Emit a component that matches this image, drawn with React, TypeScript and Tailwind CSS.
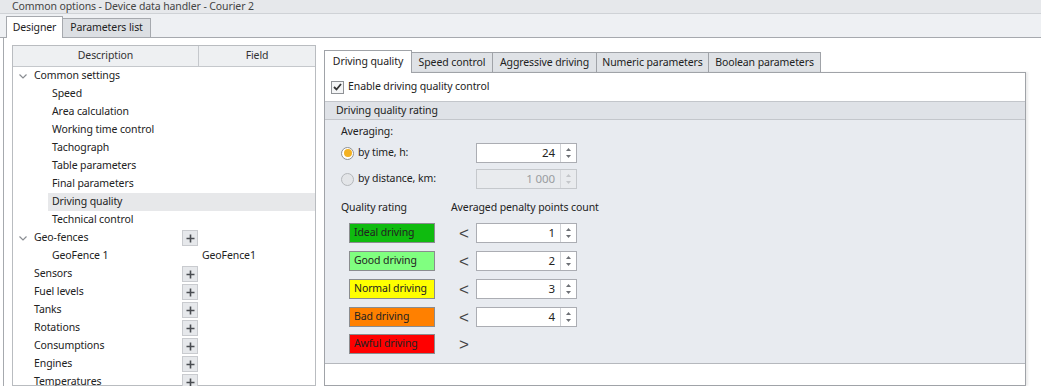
import React from 'react';

type Row = { t: string; l: 1 | 2; chev?: boolean; plus?: boolean; sel?: boolean; field?: string };

const rows: Row[] = [
  { t: 'Common settings', l: 1, chev: true },
  { t: 'Speed', l: 2 },
  { t: 'Area calculation', l: 2 },
  { t: 'Working time control', l: 2 },
  { t: 'Tachograph', l: 2 },
  { t: 'Table parameters', l: 2 },
  { t: 'Final parameters', l: 2 },
  { t: 'Driving quality', l: 2, sel: true },
  { t: 'Technical control', l: 2 },
  { t: 'Geo-fences', l: 1, chev: true, plus: true },
  { t: 'GeoFence 1', l: 2, field: 'GeoFence1' },
  { t: 'Sensors', l: 1, plus: true },
  { t: 'Fuel levels', l: 1, plus: true },
  { t: 'Tanks', l: 1, plus: true },
  { t: 'Rotations', l: 1, plus: true },
  { t: 'Consumptions', l: 1, plus: true },
  { t: 'Engines', l: 1, plus: true },
  { t: 'Temperatures', l: 1, plus: true },
];

const ratings = [
  { t: 'Ideal driving', bg: 'bg-[#0fbb0f]', sign: '<', v: '1' },
  { t: 'Good driving', bg: 'bg-[#80ff80]', sign: '<', v: '2' },
  { t: 'Normal driving', bg: 'bg-[#ffff00]', sign: '<', v: '3' },
  { t: 'Bad driving', bg: 'bg-[#ff8000]', sign: '<', v: '4' },
  { t: 'Awful driving', bg: 'bg-[#ff0000]', sign: '>', v: '' },
];

function Chevron() {
  return (
    <svg width="8" height="5" viewBox="0 0 8 5" className="ml-[6px]">
      <path d="M0.5 0.5 L4 4 L7.5 0.5" fill="none" stroke="#8a8d92" strokeWidth="1.2" />
    </svg>
  );
}

function PlusButton() {
  return (
    <div className="flex h-[16px] w-[16px] items-center justify-center border border-[#c9cbcf] bg-[#e6e8eb]">
      <svg width="9" height="9" viewBox="0 0 9 9">
        <path d="M4.5 0.5 V8.5 M0.5 4.5 H8.5" stroke="#4a4d52" strokeWidth="1.6" />
      </svg>
    </div>
  );
}

function Spin({ value, disabled }: { value: string; disabled?: boolean }) {
  const arrow = disabled ? '#c4c6ca' : '#6d7075';
  return (
    <div
      className={`flex h-[20px] w-[101px] border ${
        disabled ? 'border-[#c5c8cc] bg-[#e9ebee] text-[#9a9da1]' : 'border-[#abadb3] bg-white text-[#222]'
      }`}
    >
      <div className="flex-1 pr-[5px] text-right text-[11.5px] leading-[18px]">{value}</div>
      <div className={`flex w-[16px] flex-col items-center justify-center gap-[4px] border-l ${disabled ? 'border-[#d5d7db]' : 'border-[#d0d2d6]'}`}>
        <svg width="5" height="3" viewBox="0 0 5 3">
          <path d="M0 3 L2.5 0 L5 3 Z" fill={arrow} />
        </svg>
        <svg width="5" height="3" viewBox="0 0 5 3">
          <path d="M0 0 L2.5 3 L5 0 Z" fill={arrow} />
        </svg>
      </div>
    </div>
  );
}

function Radio({ checked, disabled }: { checked?: boolean; disabled?: boolean }) {
  return (
    <div
      className={`flex h-[13px] w-[13px] items-center justify-center rounded-full border ${
        disabled ? 'border-[#b4b7bb] bg-[#e3e5e8]' : 'border-[#8d9095] bg-white'
      }`}
    >
      {checked && <div className="h-[8px] w-[8px] rounded-full bg-[#f4b223]" />}
    </div>
  );
}

export default function App() {
  const tabs = [
    { t: 'Speed control', w: 'w-[81px]' },
    { t: 'Aggressive driving', w: 'w-[104px]' },
    { t: 'Numeric parameters', w: 'w-[112px]' },
    { t: 'Boolean parameters', w: 'w-[112px]' },
  ];

  return (
    <div className="flex h-[386px] w-[1041px] flex-col overflow-hidden bg-white font-['Noto_Sans',sans-serif] text-[10.5px] tracking-[-0.1px] text-[#222]">
      {/* Title */}
      <div className="h-[14px] shrink-0 border-b border-[#cfd2d6] bg-[#e6e8eb] pl-[12px] leading-[13px] text-[#444]">
        Common options - Device data handler - Courier 2
      </div>

      {/* Page tabs */}
      <div className="flex h-[24px] shrink-0 items-end border-b border-[#a6a9ae] bg-[#eef0f3] pl-[6px]">
        <div className="-mb-px flex h-[22px] w-[57px] items-center justify-center border border-b-0 border-[#a6a9ae] bg-white">
          Designer
        </div>
        <div className="flex h-[19px] w-[88px] items-center justify-center border border-b-0 border-l-0 border-[#a6a9ae] bg-[#dcdfe3]">
          Parameters list
        </div>
      </div>

      {/* Body */}
      <div className="ml-[3px] flex min-h-0 flex-1 border-l border-[#a6a9ae]">
        {/* Tree */}
        <div className="ml-[8px] mt-[7px] w-[304px] border border-[#b9bcc0]">
          <div className="flex h-[21px] border-b border-[#c5c8cc] bg-[#eef0f2] text-[#333]">
            <div className="flex w-[186px] items-center justify-center border-r border-[#c5c8cc]">Description</div>
            <div className="flex flex-1 items-center justify-center">Field</div>
          </div>
          {rows.map((r) => (
            <div key={r.t} className="flex h-[18px] items-center">
              <div className={`flex items-center ${r.l === 1 ? 'w-[17px]' : 'w-[35px]'}`}>{r.chev && <Chevron />}</div>
              <div className={`flex h-full flex-1 items-center ${r.sel ? 'bg-[#e7e8ea]' : ''}`}>
                <div className="flex-1 pl-[4px]">{r.t}</div>
                <div className="flex w-[133px] items-center">
                  {r.plus && <PlusButton />}
                  {r.field && <span className="pl-[20px]">{r.field}</span>}
                </div>
              </div>
            </div>
          ))}
        </div>

        {/* Right tab control */}
        <div className="ml-[8px] mt-[12px] flex w-[702px] flex-col">
          <div className="flex h-[22px] items-end">
            <div className="relative z-10 -mb-px flex h-[23px] w-[88px] items-center justify-center border border-b-0 border-[#a0a3a8] bg-white">
              Driving quality
            </div>
            {tabs.map((t) => (
              <div
                key={t.t}
                className={`flex h-[20px] ${t.w} items-center justify-center border border-b-0 border-l-0 border-[#a0a3a8] bg-[#dfe2e6]`}
              >
                {t.t}
              </div>
            ))}
          </div>
          <div className="flex flex-1 flex-col border border-[#a0a3a8] bg-white shadow-[2px_0_2px_rgba(0,0,0,0.08)]">
            <div className="flex h-[28px] items-center gap-[4px] pl-[6px]">
              <div className="flex h-[13px] w-[13px] items-center justify-center border border-[#8f9296] bg-[#f4f5f6]">
                <svg width="9" height="8" viewBox="0 0 9 8">
                  <path d="M1 4 L3.5 6.5 L8 1" fill="none" stroke="#333" strokeWidth="1.8" />
                </svg>
              </div>
              <span>Enable driving quality control</span>
            </div>
            <div className="flex h-[19px] items-center border-y border-[#c3c6cb] bg-[#dfe2e7] pl-[11px]">Driving quality rating</div>
            <div className="flex h-[244px] flex-col border-b border-[#b5b8bd] bg-[#e8ebf0] pl-[16px] pt-[4px]">
              <div className="h-[14px] leading-[14px]">Averaging:</div>
              <div className="mt-[5px] flex h-[20px] items-center">
                <Radio checked />
                <span className="ml-[4px] w-[118px]">by time, h:</span>
                <Spin value="24" />
              </div>
              <div className="mt-[6px] flex h-[20px] items-center">
                <Radio disabled />
                <span className="ml-[4px] w-[118px]">by distance, km:</span>
                <Spin value="1 000" disabled />
              </div>
              <div className="mt-[12px] flex h-[14px] items-center">
                <span className="w-[110px]">Quality rating</span>
                <span>Averaged penalty points count</span>
              </div>
              {ratings.map((r, i) => (
                <div key={r.t} className={`flex h-[20px] items-center ${i === 4 ? 'mt-[7px]' : 'mt-[8px]'}`}>
                  <div className={`ml-[8px] flex h-[20px] w-[86px] items-center border border-[#8a8c8f] pl-[4px] ${r.bg}`}>
                    {r.t}
                  </div>
                  <span className="ml-[24px] w-[17px] font-['Liberation_Sans',sans-serif] text-[17px] leading-[17px] text-[#444]">
                    {r.sign}
                  </span>
                  {r.v && <Spin value={r.v} />}
                </div>
              ))}
            </div>
          </div>
        </div>
      </div>
    </div>
  );
}
